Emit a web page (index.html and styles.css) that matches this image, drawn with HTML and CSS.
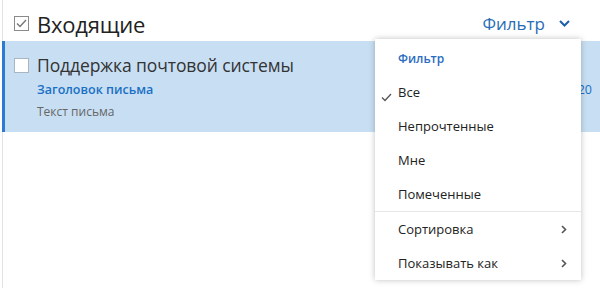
FILE: index.html
```html
<!DOCTYPE html>
<html lang="ru">
<head>
<meta charset="utf-8">
<link rel="stylesheet" href="styles.css">
</head>
<body>
<div class="app">
  <div class="list">
    <div class="header">
      <span class="cb cb-checked">
        <svg width="11" height="9" viewBox="0 0 11 9"><path d="M1 4.5 L4 7.5 L10 1" fill="none" stroke="#777" stroke-width="1.4"/></svg>
      </span>
      <span class="title">Входящие</span>
      <span class="spacer"></span>
      <span class="filter">Фильтр</span>
      <svg class="chev" width="11" height="7" viewBox="0 0 11 7"><path d="M1 1 L5.5 5.5 L10 1" fill="none" stroke="#1e5fa8" stroke-width="2"/></svg>
    </div>
    <div class="row">
      <div class="row-top">
        <span class="cb"></span>
        <span class="sender">Поддержка почтовой системы</span>
      </div>
      <div class="row-sub">
        <span class="subject">Заголовок письма</span>
        <span class="time">14:20</span>
      </div>
      <div class="preview">Текст письма</div>
    </div>
  </div>
  <div class="menu">
    <div class="menu-item menu-head">Фильтр</div>
    <div class="menu-item"><span class="check"><svg width="11" height="9" viewBox="0 0 11 9"><path d="M1 4.5 L4 7.5 L10 1" fill="none" stroke="#555" stroke-width="1.3"/></svg></span>Все</div>
    <div class="menu-item">Непрочтенные</div>
    <div class="menu-item">Мне</div>
    <div class="menu-item">Помеченные</div>
    <div class="menu-sep"></div>
    <div class="menu-item">Сортировка<span class="sub"><svg width="6" height="9" viewBox="0 0 6 9"><path d="M1 1 L4.5 4.5 L1 8" fill="none" stroke="#555" stroke-width="1.6"/></svg></span></div>
    <div class="menu-item">Показывать как<span class="sub"><svg width="6" height="9" viewBox="0 0 6 9"><path d="M1 1 L4.5 4.5 L1 8" fill="none" stroke="#555" stroke-width="1.6"/></svg></span></div>
  </div>
</div>
</body>
</html>
```
FILE: styles.css
```css
* { box-sizing: border-box; }
html, body {
  margin: 0;
  padding: 0;
  background: #fff;
  font-family: "Open Sans", "Noto Sans", sans-serif;
  color: #333;
}
.app {
  position: relative;
  width: 600px;
  height: 288px;
  overflow: hidden;
}
.list {
  margin-left: 2px;
  height: 288px;
  border-left: 1px solid #e3e3e3;
}
.header {
  height: 41px;
  display: flex;
  align-items: center;
  padding-left: 11px;
  padding-right: 30px;
  padding-top: 6px;
}
.cb {
  width: 15px;
  height: 15px;
  border: 1px solid #8a8a8a;
  background: #fff;
  display: inline-flex;
  align-items: center;
  justify-content: center;
  flex: none;
}
.title {
  font-size: 22px;
  margin-left: 8px;
  color: #222;
  letter-spacing: -0.2px;
}
.spacer { flex: 1; }
.filter {
  font-size: 17px;
  color: #2a6cb6;
}
.chev { margin-left: 14px; margin-top: 0; }
.row {
  height: 91px;
  background: #c8dff3;
  border-left: 3px solid #2b7bd0;
  margin-left: -1px;
  padding: 10px 8px 0 9px;
}
.row-top {
  display: flex;
  align-items: center;
  height: 28px;
}
.row-top .cb { border-color: #a9b5c0; }
.sender {
  font-size: 17.5px;
  margin-left: 8px;
  color: #333;
  letter-spacing: -0.1px;
}
.row-sub {
  display: flex;
  align-items: center;
  height: 20px;
  padding-left: 23px;
}
.subject {
  font-size: 12.5px;
  color: #1a6fc4;
  font-weight: 600;
  flex: 1;
}
.time {
  font-size: 12.5px;
  color: #1a6fc4;
}
.preview {
  padding-left: 23px;
  font-size: 12px;
  color: #666;
  height: 26px;
  line-height: 26px;
}
.menu {
  position: absolute;
  left: 375px;
  top: 39px;
  width: 206px;
  height: 241px;
  background: #fff;
  box-shadow: 0 0 6px rgba(0,0,0,0.25);
  padding-top: 2px;
}
.menu-item {
  height: 34px;
  display: flex;
  align-items: center;
  padding-left: 23px;
  padding-right: 14px;
  font-size: 13px;
  color: #222;
  position: relative;
}
.menu-head {
  color: #2a6cc0;
  font-weight: 600;
  font-size: 12px;
}
.check {
  position: absolute;
  left: 6px;
  top: 13px;
}
.menu-sep {
  height: 1px;
  background: #e6e6e6;
}
.sub {
  margin-left: auto;
  display: flex;
}
```
